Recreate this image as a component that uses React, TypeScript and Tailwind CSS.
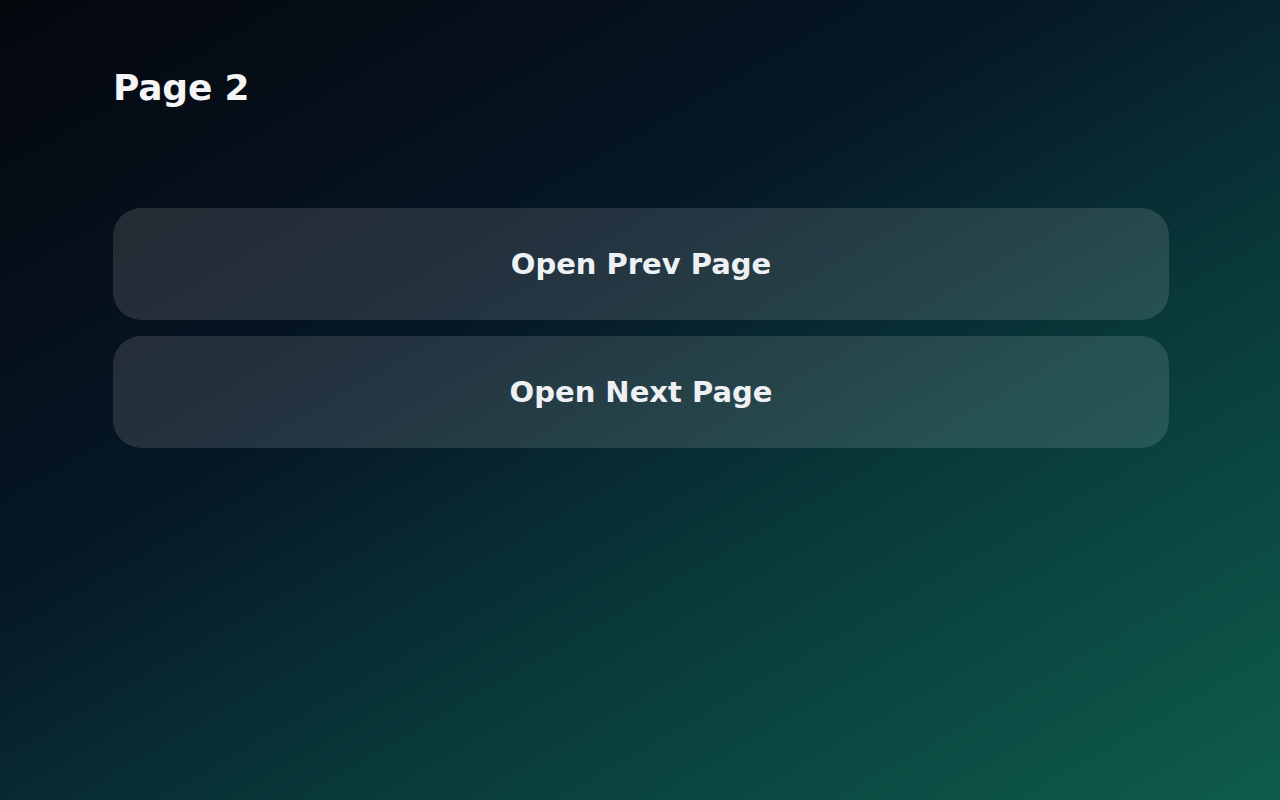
import React from "react";

export default function App() {
  return (
    <div
      className="min-h-[800px] w-full bg-[linear-gradient(150deg,#05070d_0%,#061726_38%,#093a3a_65%,#0e5c4c_100%)] pl-[113px] pr-[111px] pt-[68px] text-white"
      style={{ fontFamily: '"DejaVu Sans", sans-serif' }}
    >
      <h1 className="text-[36px] font-bold leading-10 tracking-[-0.2px] text-[#f5f5f7]">Page 2</h1>

      <div className="mt-[100px] flex flex-col gap-4">
        <button className="flex h-28 w-full items-center justify-center rounded-[28px] bg-white/12 pt-px text-[29px] font-bold text-[#eef1f4]">
          Open Prev Page
        </button>
        <button className="flex h-28 w-full items-center justify-center rounded-[28px] bg-white/12 pt-px text-[29px] font-bold text-[#eef1f4]">
          Open Next Page
        </button>
      </div>
    </div>
  );
}
